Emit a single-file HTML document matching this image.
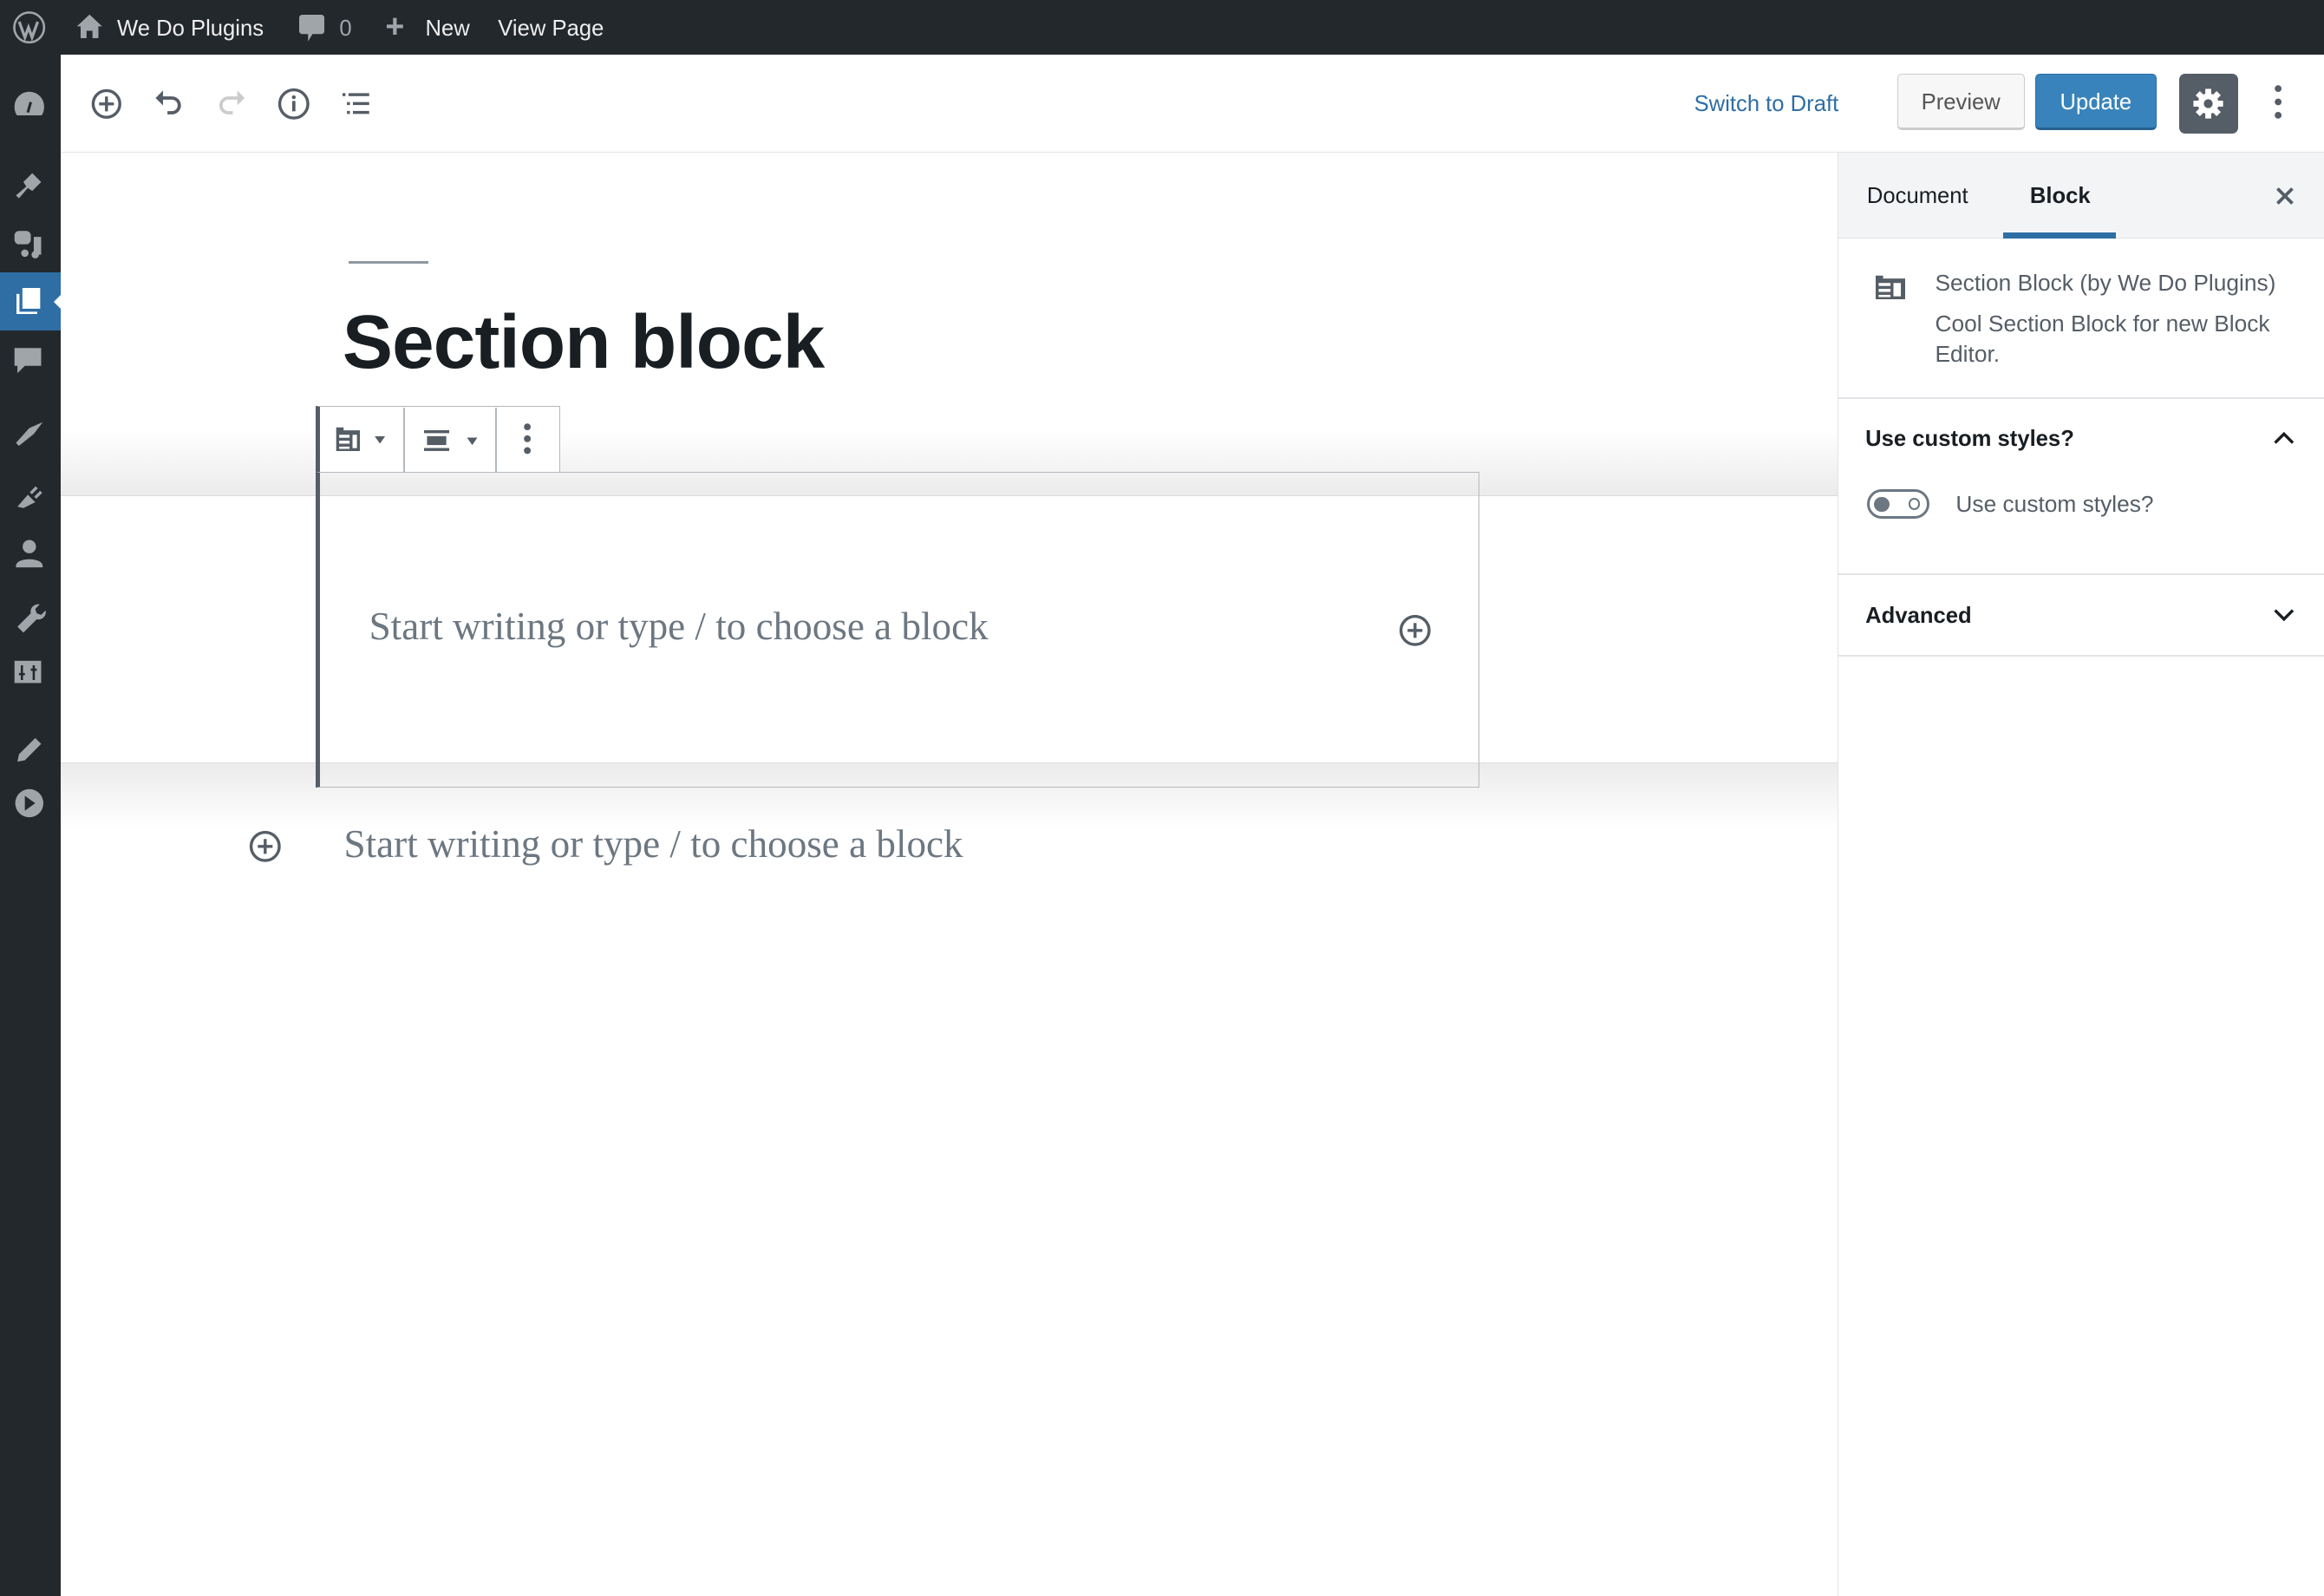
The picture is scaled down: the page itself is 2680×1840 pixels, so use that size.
<!DOCTYPE html>
<html><head><meta charset="utf-8"><style>
*{box-sizing:border-box;margin:0;padding:0}
html,body{width:2680px;height:1840px;overflow:hidden;background:#fff}
#r{zoom:1.7092;width:1568px;height:1077px;position:relative;font-family:"Liberation Sans",sans-serif;color:#191e23;overflow:hidden}
.a{position:absolute}
.ab{left:0;top:0;width:1568px;height:37px;background:#23282d;color:#eee;font-size:14.5px}
.sb{left:0;top:37px;width:41px;height:1040px;background:#23282d}
.hdr{left:41px;top:37px;width:1527px;height:66px;border-bottom:1px solid #e2e4e7;background:#fff}
.serif{font-family:"Liberation Serif",serif;color:#6c7781;font-size:26.4px;white-space:nowrap}
.side{left:1240px;top:103px;width:328px;height:974px;border-left:1px solid #e2e4e7;background:#fff}
</style></head><body><div id="r">
<div class="a ab">
 <svg class="a" style="left:8px;top:7px" width="23" height="23" viewBox="0 0 24 24"><circle cx="12" cy="12" r="10.5" fill="none" stroke="#a0a5aa" stroke-width="1.6"/><path d="M5 8l4 11 2.5-7L14 19l4-11" fill="none" stroke="#a0a5aa" stroke-width="2"/></svg>
 <svg class="a" style="left:51px;top:9px" width="19" height="18" viewBox="0 0 19 18"><path d="M9.5 1L1 9h2.5v8h4v-5h4v5h4V9H18z" fill="#a0a5aa"/></svg>
 <div class="a" style="left:79px;top:11px;font-size:15px">We Do Plugins</div>
 <svg class="a" style="left:202px;top:10px" width="17" height="19" viewBox="0 0 17 19"><path d="M2 0h13a2 2 0 012 2v9a2 2 0 01-2 2H9l-3 5v-5H2a2 2 0 01-2-2V2a2 2 0 012-2z" fill="#a0a5aa"/></svg>
 <div class="a" style="left:229px;top:11px;color:#a0a5aa;font-size:15px">0</div>
 <div class="a" style="left:260px;top:9px;font-size:22px;line-height:18px;color:#a0a5aa;font-weight:bold">+</div>
 <div class="a" style="left:287px;top:11px;font-size:15px">New</div>
 <div class="a" style="left:336px;top:11px;font-size:15px">View Page</div>
</div>
<div class="a sb">
 <svg class="a" style="left:9px;top:24px" width="22" height="19" viewBox="0 0 22 19"><path d="M11 1a10 10 0 00-10 10c0 2.5.6 4.5 1.7 6h16.6c1.1-1.5 1.7-3.5 1.7-6a10 10 0 00-10-10z" fill="#a0a5aa"/><path d="M10 15l2-7" stroke="#23282d" stroke-width="1.8"/></svg>
 <div class="a" style="left:0;top:147px;width:41px;height:39px;background:#2e6ea5"></div>
 <svg class="a" style="left:11px;top:157px" width="17" height="18" viewBox="0 0 17 18"><path d="M1 4v13h13" fill="none" stroke="#fff" stroke-width="2"/><rect x="4" y="0" width="12" height="14" fill="#fff"/></svg>
 <div class="a" style="left:36px;top:161px;width:0;height:0;border:6px solid transparent;border-right-color:#fff;border-left:0"></div>
 <svg class="a" style="left:9px;top:75px" width="22" height="400" viewBox="0 0 22 400" fill="#a0a5aa">
  <path d="M2 20l7-6-2-3 6-6 6 6-6 6-3-2-6 7z"/>
  <rect x="1" y="44" width="11" height="9" rx="3"/><path d="M14 48h5v12h-5z"/><circle cx="8" cy="59" r="2.5"/><circle cx="15" cy="60" r="2.5"/>
  <path d="M1 123h18v12H8l-5 5v-5H1z"/>
  <g transform="translate(0,-38)">
  <path d="M2 225l9-10 9-4-6 8-10 8z"/>
  <path d="M3 268l7-8 5 5-8 4z"/><path d="M12 259l4-4M15 262l4-4" stroke="#a0a5aa" stroke-width="2"/>
  <circle cx="11" cy="295" r="4.5"/><path d="M2 308c0-6 18-6 18 0v1H2z"/>
  <path d="M3 349l9-9a5 5 0 016-6l-3 3 1 3 3 1 3-3a5 5 0 01-6 6l-9 9z"/>
  <rect x="1" y="372" width="18" height="15"/><path d="M6 375v10M4 381h4M14 375v10M12 378h4" stroke="#23282d" stroke-width="1.5"/>
  </g>
 </svg>
 <svg class="a" style="left:9px;top:457px" width="22" height="60" viewBox="0 0 22 60"><path d="M3 20l1-5 11-11 4 4-11 11z" fill="#a0a5aa"/><circle cx="11" cy="48" r="9.5" fill="#a0a5aa"/><path d="M8 43l7 5-7 5z" fill="#23282d"/></svg>
</div>
<div class="a hdr">
 <svg class="a" style="left:20px;top:22px" width="22" height="22" viewBox="0 0 22 22"><circle cx="11" cy="11" r="9" fill="none" stroke="#555d66" stroke-width="2"/><path d="M11 6v10M6 11h10" stroke="#555d66" stroke-width="2"/></svg>
 <svg class="a" style="left:62px;top:22px" width="22" height="22" viewBox="0 0 22 22"><path d="M5 7h8a5 5 0 010 10h-3" fill="none" stroke="#555d66" stroke-width="2.2"/><path d="M2 7l5-5v10z" fill="#555d66"/></svg>
 <svg class="a" style="left:104px;top:22px" width="22" height="22" viewBox="0 0 22 22"><path d="M17 7H9a5 5 0 000 10h3" fill="none" stroke="#ccc" stroke-width="2.2"/><path d="M20 7l-5-5v10z" fill="#ccc"/></svg>
 <svg class="a" style="left:146px;top:22px" width="22" height="22" viewBox="0 0 22 22"><circle cx="11" cy="11" r="9.5" fill="none" stroke="#555d66" stroke-width="2"/><path d="M11 9v7" stroke="#555d66" stroke-width="2.2"/><circle cx="11" cy="6.5" r="1.3" fill="#555d66"/></svg>
 <svg class="a" style="left:190px;top:24px" width="20" height="18" viewBox="0 0 20 18" fill="#555d66"><rect x="0" y="2" width="2" height="2"/><rect x="4" y="2" width="14" height="2"/><rect x="3" y="8" width="2" height="2"/><rect x="7" y="8" width="11" height="2"/><rect x="3" y="14" width="2" height="2"/><rect x="7" y="14" width="11" height="2"/></svg>
 <div class="a" style="left:1102px;top:25px;font-size:15px;color:#2e6ea5">Switch to Draft</div>
 <div class="a" style="left:1239px;top:13px;width:86px;height:38px;border:1px solid #ccc;border-bottom-width:2px;border-radius:3px;background:#f7f7f7;color:#555;font-size:15px;text-align:center;line-height:38px">Preview</div>
 <div class="a" style="left:1332px;top:13px;width:82px;height:38px;border:1px solid #2e6ea5;border-bottom:2px solid #266090;border-radius:3px;background:#3883bb;color:#fff;font-size:15px;text-align:center;line-height:38px">Update</div>
 <div class="a" style="left:1429px;top:13px;width:40px;height:40px;border-radius:4px;background:#555d66"></div>
 <svg class="a" style="left:1437px;top:21px" width="24" height="24" viewBox="0 0 24 24"><g fill="#fff"><circle cx="12" cy="12" r="7"/><rect x="10" y="2" width="4" height="20"/><rect x="2" y="10" width="20" height="4"/><rect x="10" y="2" width="4" height="20" transform="rotate(45 12 12)"/><rect x="10" y="2" width="4" height="20" transform="rotate(-45 12 12)"/></g><circle cx="12" cy="12" r="3" fill="#555d66"/></svg>
 <svg class="a" style="left:1493px;top:20px" width="6" height="24" viewBox="0 0 6 24" fill="#555d66"><circle cx="3" cy="3" r="2.3"/><circle cx="3" cy="12" r="2.3"/><circle cx="3" cy="21" r="2.3"/></svg>
</div>
<!-- editor -->
<div class="a" style="left:235px;top:176px;width:54px;height:2px;background:#8f98a1"></div>
<div class="a" style="left:231px;top:202px;font-size:51px;font-weight:bold;letter-spacing:-0.5px;color:#191e23">Section block</div>
<div class="a" style="left:41px;top:290px;width:1199px;height:44px;background:linear-gradient(#fff,#ebebeb)"></div>
<div class="a" style="left:41px;top:514px;width:1199px;height:46px;background:linear-gradient(#ebebeb,#fff)"></div>
<div class="a" style="left:41px;top:334px;width:1199px;height:181px;background:#fff;border-top:1px solid #ddd;border-bottom:1px solid #ddd"></div>
<div class="a" style="left:213px;top:318px;width:785px;height:213px;border:1px solid #b4b9be;border-left:3px solid #555d66"></div>
<div class="a" style="left:213px;top:274px;width:165px;height:45px;background:#fff;border:1px solid #b4b9be;border-left:3px solid #555d66"></div>
<div class="a" style="left:272px;top:275px;width:1px;height:43px;background:#b4b9be"></div>
<div class="a" style="left:334px;top:275px;width:1px;height:43px;background:#b4b9be"></div>
<svg class="a" style="left:226px;top:287px" width="36" height="18" viewBox="0 0 36 18" fill="#555d66"><path d="M1 1h5v2h11v14H1z"/><rect x="3" y="6" width="7" height="2" fill="#fff"/><rect x="3" y="10" width="7" height="2" fill="#fff"/><rect x="3" y="14" width="7" height="1.5" fill="#fff"/><rect x="12" y="6" width="3" height="9" fill="#fff"/><path d="M27 7h7l-3.5 5z"/></svg>
<svg class="a" style="left:286px;top:290px" width="38" height="14" viewBox="0 0 38 14" fill="#555d66"><rect x="0" y="0" width="17" height="2"/><rect x="2" y="4" width="13" height="6"/><rect x="0" y="12" width="17" height="2"/><path d="M29 5h7l-3.5 5z"/></svg>
<svg class="a" style="left:353px;top:285px" width="6" height="22" viewBox="0 0 6 22" fill="#555d66"><circle cx="3" cy="3" r="2.3"/><circle cx="3" cy="11" r="2.3"/><circle cx="3" cy="19" r="2.3"/></svg>
<div class="a serif" style="left:249px;top:407px">Start writing or type / to choose a block</div>
<svg class="a" style="left:944px;top:414px" width="22" height="22" viewBox="0 0 22 22"><circle cx="11" cy="11" r="9.5" fill="none" stroke="#555d66" stroke-width="2"/><path d="M11 6v10M6 11h10" stroke="#555d66" stroke-width="2"/></svg>
<div class="a serif" style="left:232px;top:554px">Start writing or type / to choose a block</div>
<svg class="a" style="left:168px;top:560px" width="22" height="22" viewBox="0 0 22 22"><circle cx="11" cy="11" r="9.5" fill="none" stroke="#555d66" stroke-width="2"/><path d="M11 6v10M6 11h10" stroke="#555d66" stroke-width="2"/></svg>
<!-- sidebar -->
<div class="a side">
 <div class="a" style="left:0;top:0;width:328px;height:58px;background:#f3f4f5;border-bottom:1px solid #e2e4e7"></div>
 <div class="a" style="left:19px;top:21px;font-size:15px">Document</div>
 <div class="a" style="left:129px;top:21px;font-size:15px;font-weight:bold">Block</div>
 <div class="a" style="left:111px;top:54px;width:76px;height:4px;background:#2e6ea5"></div>
 <svg class="a" style="left:294px;top:22px" width="14" height="14" viewBox="0 0 14 14"><path d="M2 2l10 10M12 2L2 12" stroke="#555d66" stroke-width="2.2"/></svg>
 <svg class="a" style="left:25px;top:82px" width="20" height="20" viewBox="0 0 20 20" fill="#555d66"><path d="M0 1h5v2h16v14H0z"/><rect x="2" y="6" width="8" height="2" fill="#fff"/><rect x="2" y="10" width="8" height="2" fill="#fff"/><rect x="2" y="14" width="8" height="1.5" fill="#fff"/><rect x="12" y="6" width="5" height="9" fill="#fff"/></svg>
 <div class="a" style="left:65px;top:79px;font-size:15.4px;color:#555d66;white-space:nowrap">Section Block (by We Do Plugins)</div>
 <div class="a" style="left:65px;top:105px;width:250px;font-size:15.4px;line-height:21px;color:#555d66">Cool Section Block for new Block Editor.</div>
 <div class="a" style="left:0;top:165px;width:328px;height:1px;background:#e2e4e7"></div>
 <div class="a" style="left:18px;top:185px;font-size:15px;font-weight:bold">Use custom styles?</div>
 <svg class="a" style="left:293px;top:187px" width="15" height="10" viewBox="0 0 15 10"><path d="M1.5 8.5l6-6 6 6" fill="none" stroke="#191e23" stroke-width="2"/></svg>
 <div class="a" style="left:19px;top:227px;width:42px;height:20px;border:2px solid #6c7781;border-radius:10px"></div>
 <div class="a" style="left:24px;top:232px;width:10px;height:10px;border-radius:5px;background:#6c7781"></div>
 <div class="a" style="left:47px;top:233px;width:8px;height:8px;border-radius:4px;border:1.5px solid #6c7781"></div>
 <div class="a" style="left:79px;top:228px;font-size:15.4px;color:#555d66">Use custom styles?</div>
 <div class="a" style="left:0;top:284px;width:328px;height:1px;background:#e2e4e7"></div>
 <div class="a" style="left:18px;top:304px;font-size:15px;font-weight:bold">Advanced</div>
 <svg class="a" style="left:293px;top:307px" width="15" height="10" viewBox="0 0 15 10"><path d="M1.5 1.5l6 6 6-6" fill="none" stroke="#191e23" stroke-width="2"/></svg>
 <div class="a" style="left:0;top:339px;width:328px;height:1px;background:#e2e4e7"></div>
</div>
</div></body></html>
